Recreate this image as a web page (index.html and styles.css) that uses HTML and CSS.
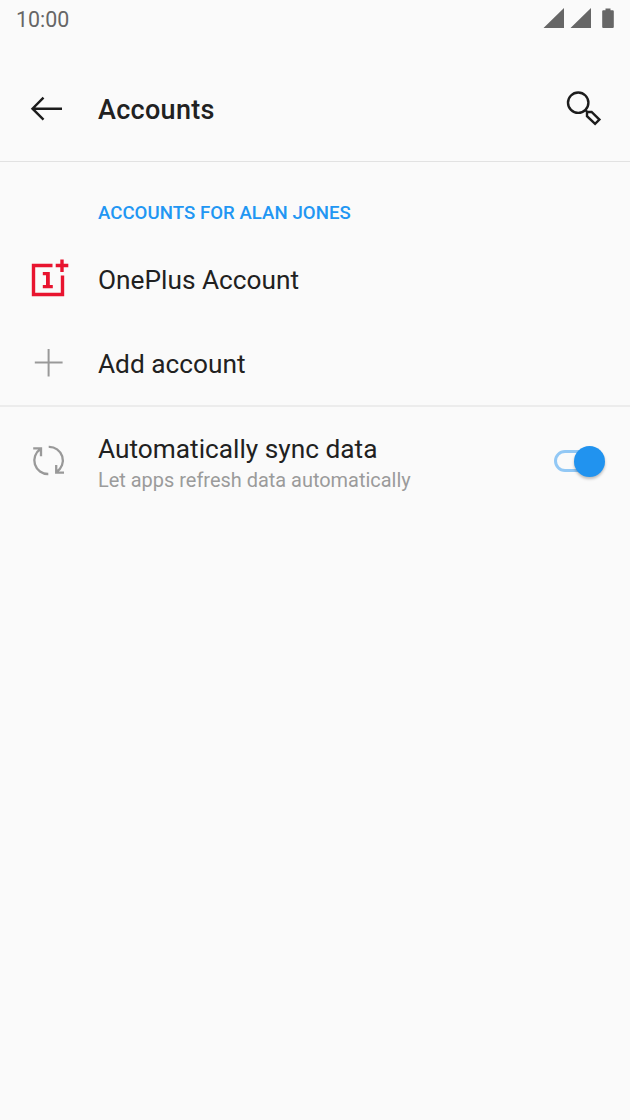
FILE: index.html
```html
<!DOCTYPE html>
<html lang="en">
<head>
<meta charset="utf-8">
<title>Accounts</title>
<link rel="stylesheet" href="styles.css">
</head>
<body>
<div class="screen">
  <div class="status-bar">
    <span class="clock">10:00</span>
    <svg class="status-icons" viewBox="540 0 80 38" width="80" height="38" aria-hidden="true">
      <path d="M564 8V28H543.5ZM591 8V28H570.5Z"/>
      <path d="M605.5 8.5h5v1.7h2.2q1.1 0 1.1 1.1v15.600q0 1.100-1.100 1.100h-9.400q-1.100 0-1.100-1.100V11.300q0-1.100 1.100-1.100h2.200Z"/>
    </svg>
  </div>
  <header class="app-bar">
    <div class="lead">
      <svg viewBox="20 84 60 50" width="60" height="50" aria-label="Back">
        <path class="ink" d="M62 108.700H33M43.500 97.700L32.500 108.700L43.500 119.700"/>
      </svg>
    </div>
    <h1 class="title">Accounts</h1>
    <svg class="search" viewBox="550 79 70 60" width="70" height="60" aria-label="Search">
      <circle class="ink" cx="578.200" cy="102.700" r="10.200"/>
      <path class="ink" d="M585.300 110L587.500 112.200M587 112H591.600L599.400 119.600L595.100 123.900L587 116.200Z"/>
    </svg>
  </header>
  <main>
    <section class="group">
      <h2 class="group-title">ACCOUNTS FOR ALAN JONES</h2>
      <div class="row">
        <div class="lead">
          <svg viewBox="20 249 60 60" width="60" height="60" aria-hidden="true">
            <path class="brand" d="M52.500 265.500H33.500V294.500H62.500V275.500M62 259.500V272M55.700 265.500H68.300"/>
            <path class="brand-one" d="M42.800 272H49.800V285H52.800V288.300H42.800V285H46V275.300H42.800Z"/>
          </svg>
        </div>
        <div class="label">OnePlus Account</div>
      </div>
      <div class="row">
        <div class="lead">
          <svg viewBox="20 333 60 60" width="60" height="60" aria-hidden="true">
            <path class="muted" d="M48.600 349V376.600M34.800 362.600H62.600"/>
          </svg>
        </div>
        <div class="label">Add account</div>
      </div>
    </section>
    <section class="row sync">
      <div class="lead">
        <svg viewBox="20 431 60 60" width="60" height="60" aria-hidden="true">
          <path class="muted sync-line" d="M48.300 474A13.600 13.600 0 0 1 40.500 449M33.200 448.400H41V456.300M48.700 446.900A13.600 13.600 0 0 1 56.500 472M56.200 465V472.700H64"/>
        </svg>
      </div>
      <div class="label">
        <div>Automatically sync data</div>
        <div class="summary">Let apps refresh data automatically</div>
      </div>
      <div class="switch" role="switch" aria-checked="true"><span class="thumb"></span></div>
    </section>
  </main>
</div>
</body>
</html>
```
FILE: styles.css
```css
* { box-sizing: border-box; }
body {
  margin: 0;
  background: #fafafa;
  color: #212121;
  font-family: Roboto, "Liberation Sans", sans-serif;
}
.screen { width: 630px; height: 1120px; overflow: hidden; }
svg { display: block; fill: none; flex: none; }
.status-bar {
  display: flex;
  justify-content: space-between;
  height: 38px;
  padding: 0 10px 0 16px;
  color: #666;
}
.clock { font-size: 21.400px; line-height: 39px; }
.status-icons { fill: #666; }
.app-bar {
  display: flex;
  align-items: center;
  height: 124px;
  padding: 19px 10px 0 0;
  border-bottom: 1px solid #e2e2e2;
}
.lead { width: 98px; padding-left: 20px; flex: none; }
.title {
  flex: 1;
  margin: 0;
  padding-top: 1px;
  font-size: 27px;
  font-weight: 500;
  line-height: 32px;
  letter-spacing: .3px;
}
.ink { stroke: #1c1c1c; stroke-width: 2.400; }
.group { border-bottom: 2px solid #ececec; height: 245px; }
.group-title {
  margin: 0;
  height: 75px;
  padding: 39px 0 0 98px;
  font-size: 18.600px;
  font-weight: 500;
  line-height: 24px;
  letter-spacing: .05px;
  color: #2196f3;
}
.row { display: flex; align-items: center; height: 84px; }
.label { flex: 1; font-size: 26.250px; line-height: 31px; padding-top: 3px; }
.summary { font-size: 19.950px; color: #9b9b9b; }
.brand { stroke: #e8142f; stroke-width: 3.400; }
.brand-one { fill: #e8142f; }
.muted { stroke: #999; stroke-width: 2; }
.sync-line { stroke-width: 2.300; }
.sync { height: 108px; }
.sync .label { padding-top: 7px; }
.switch {
  display: flex;
  align-items: center;
  justify-content: flex-end;
  width: 50px;
  height: 22px;
  margin-right: 26px;
  border: 3px solid #92c8f5;
  border-radius: 11px;
}
.thumb {
  width: 31px;
  height: 31px;
  margin-right: -4px;
  flex: none;
  border-radius: 50%;
  background: #2193ef;
  box-shadow: 0 2px 3px rgba(0, 0, 0, .25);
}
```
